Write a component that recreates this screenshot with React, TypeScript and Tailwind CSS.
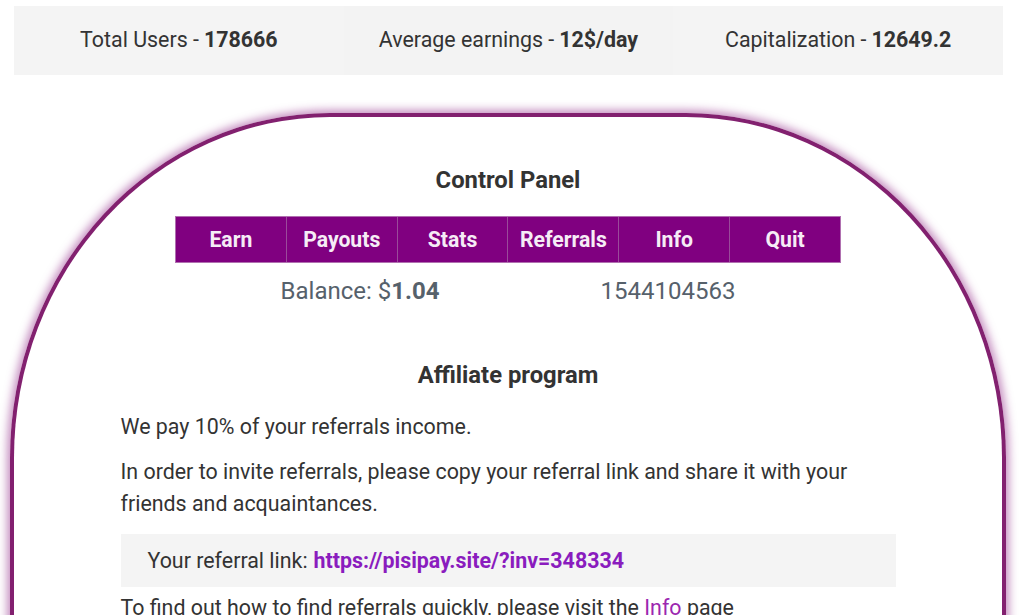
import React from 'react';

const stats = [
  { label: 'Total Users', value: '178666' },
  { label: 'Average earnings', value: '12$/day' },
  { label: 'Capitalization', value: '12649.2' },
];

const menu = ['Earn', 'Payouts', 'Stats', 'Referrals', 'Info', 'Quit'];

const App: React.FC = () => {
  return (
    <div className="min-h-screen bg-white font-['Roboto',sans-serif] text-[#333]">
      {/* stats strip */}
      <div className="ml-[14px] mt-[6px] grid h-[69px] w-[989px] grid-cols-3 bg-[#f4f4f4]">
        {stats.map((s, i) => (
          <div
            key={s.label}
            className={`flex items-center justify-center text-[21.4px] ${i === 1 ? 'bg-[#f3f3f3]' : ''}`}
          >
            {s.label} - <span className="ml-[5px] font-bold">{s.value}</span>
          </div>
        ))}
      </div>

      {/* main card */}
      <div className="ml-[10px] mt-[38px] min-h-[560px] w-[996px] rounded-tl-[320px_345px] rounded-tr-[320px_345px] border-[4px] border-b-0 border-[#82206f] pb-10 pt-[47px] shadow-[0_0_8px_3px_rgba(140,30,130,0.5)]">
        <h2 className="text-center text-[23.8px] font-bold leading-[32px]">Control Panel</h2>

        <div className="mx-auto mt-[20px] flex h-[47px] w-[666px] border border-[#b070b0] bg-[#800080]">
          {menu.map((m, i) => (
            <div
              key={m}
              className={`flex flex-1 items-center justify-center text-[21.2px] font-bold text-[#f6ecf6] ${i > 0 ? 'border-l border-[#9a4a9a]' : ''}`}
            >
              {m}
            </div>
          ))}
        </div>

        <div className="mt-[12px] flex justify-center gap-[161px] text-[24px] leading-[32px] text-[#56616b]">
          <div>
            Balance: $<span className="font-bold">1.04</span>
          </div>
          <div>1544104563</div>
        </div>

        <h2 className="mt-[52px] text-center text-[23.8px] font-bold leading-[32px]">Affiliate program</h2>

        <div className="mx-auto w-[775px] text-[21.4px] leading-[32px]">
          <p className="mt-[20px]">We pay 10% of your referrals income.</p>
          <p className="mt-[13px]">
            In order to invite referrals, please copy your referral link and share it with your friends and
            acquaintances.
          </p>
          <div className="mt-[14px] flex h-[53px] items-center bg-[#f4f4f4] pl-[27px]">
            Your referral link:
            <a href="#" className="ml-[6px] font-bold text-[#8a1cbe]">
              https://pisipay.site/?inv=348334
            </a>
          </div>
          <p className="mt-[5px]">
            To find out how to find referrals quickly, please visit the{' '}
            <a href="#" className="text-[#9c27b0] underline">
              Info
            </a>{' '}
            page
          </p>
        </div>
      </div>
    </div>
  );
};

export default App;
